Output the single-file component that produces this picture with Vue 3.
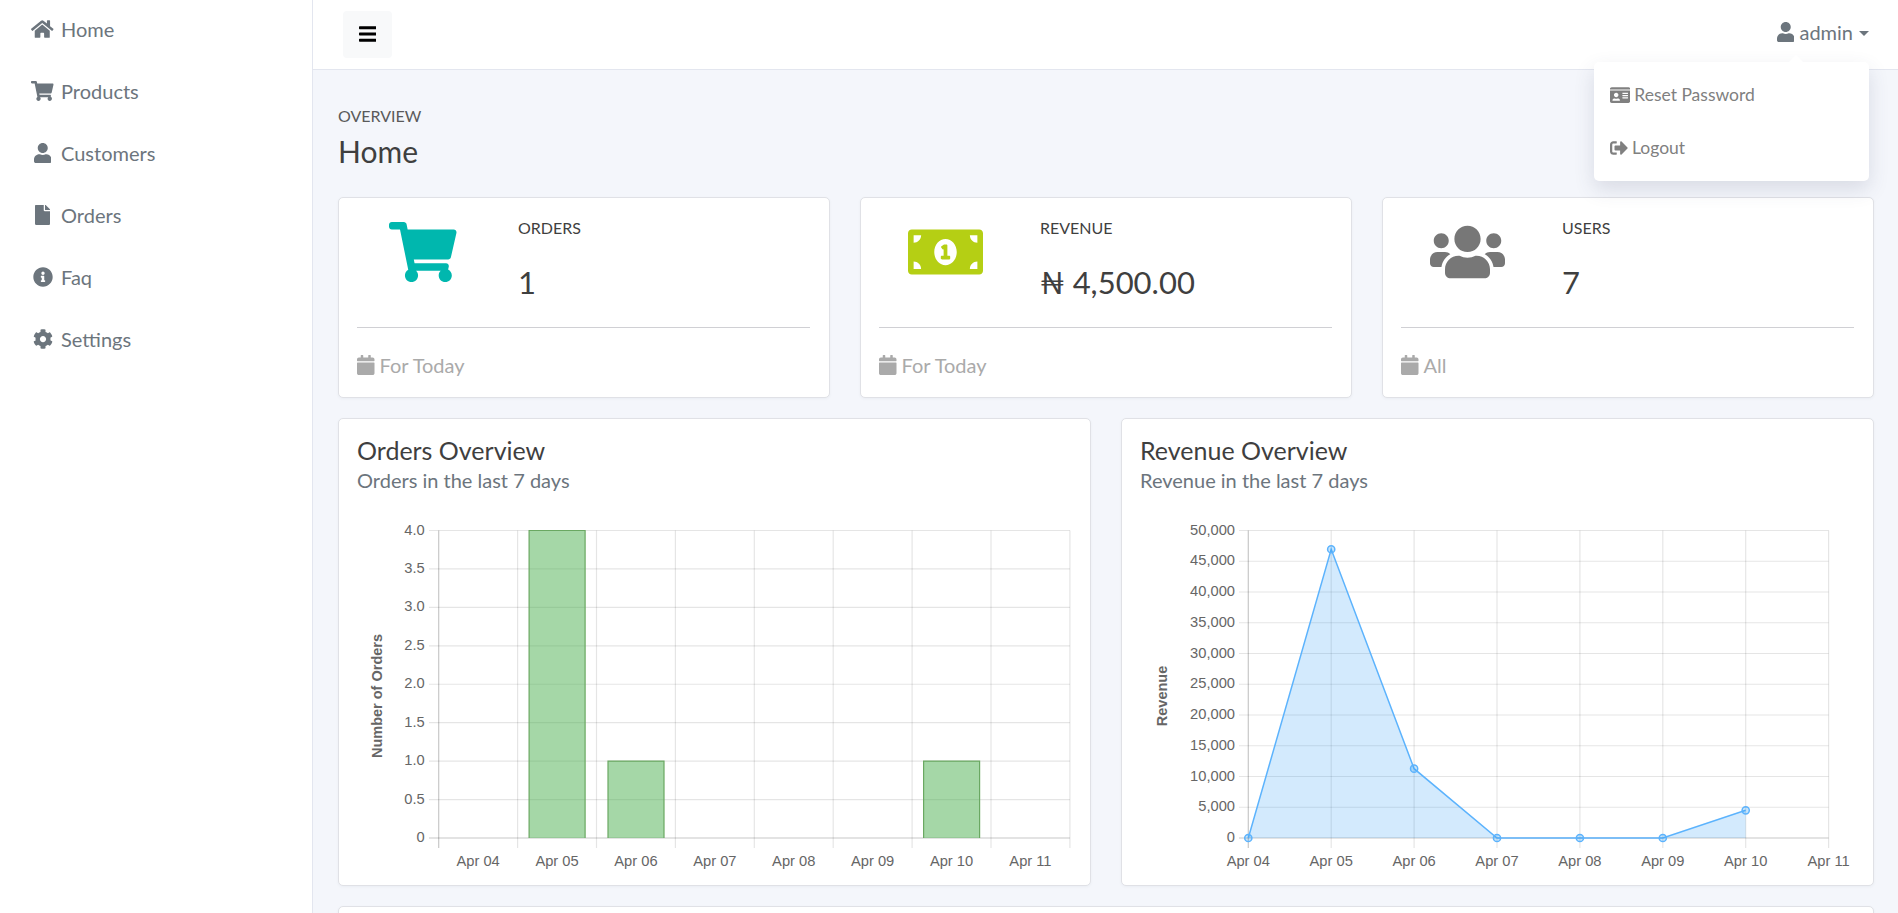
<script setup>
import { h } from 'vue'

const paths = {
  home: [576, 'M280.37 148.26L96 300.11V464a16 16 0 0 0 16 16l112.06-.29a16 16 0 0 0 15.92-16V368a16 16 0 0 1 16-16h64a16 16 0 0 1 16 16v95.64a16 16 0 0 0 16 16.05L464 480a16 16 0 0 0 16-16V300L295.67 148.26a12.19 12.19 0 0 0-15.3 0zM571.6 251.47L488 182.56V44.05a12 12 0 0 0-12-12h-56a12 12 0 0 0-12 12v72.61L318.47 43a48 48 0 0 0-61 0L4.34 251.47a12 12 0 0 0-1.6 16.9l25.5 31A12 12 0 0 0 45.15 301l235.22-193.74a12.19 12.19 0 0 1 15.3 0L530.9 301a12 12 0 0 0 16.9-1.6l25.5-31a12 12 0 0 0-1.7-16.93z'],
  cart: [576, 'M528.12 301.319l47.273-208C578.806 78.301 567.391 64 551.99 64H159.208l-9.166-44.81C147.758 8.021 137.93 0 126.529 0H24C10.745 0 0 10.745 0 24v16c0 13.255 10.745 24 24 24h69.883l70.248 343.435C147.325 417.1 136 435.222 136 456c0 30.928 25.072 56 56 56s56-25.072 56-56c0-15.674-6.447-29.835-16.824-40h209.647C430.447 426.165 424 440.326 424 456c0 30.928 25.072 56 56 56s56-25.072 56-56c0-22.172-12.888-41.332-31.579-50.405l5.517-24.276c3.413-15.018-8.002-29.319-23.403-29.319H218.117l-6.545-32h293.145c11.206 0 20.92-7.754 23.403-18.681z'],
  user: [448, 'M224 256c70.7 0 128-57.3 128-128S294.7 0 224 0 96 57.3 96 128s57.3 128 128 128zm89.6 32h-16.7c-22.2 10.2-46.9 16-72.9 16s-50.6-5.8-72.9-16h-16.7C60.2 288 0 348.2 0 422.4V464c0 26.5 21.5 48 48 48h352c26.5 0 48-21.5 48-48v-41.6c0-74.2-60.2-134.4-134.4-134.4z'],
  file: [384, 'M224 136V0H24C10.7 0 0 10.7 0 24v464c0 13.3 10.7 24 24 24h336c13.3 0 24-10.7 24-24V160H248c-13.2 0-24-10.8-24-24zm160-14.1v6.1H256V0h6.1c6.4 0 12.5 2.5 17 7l97.9 98c4.5 4.5 7 10.6 7 16.9z'],
  info: [512, 'M256 8C119.043 8 8 119.083 8 256c0 136.997 111.043 248 248 248s248-111.003 248-248C504 119.083 392.957 8 256 8zm0 110c23.196 0 42 18.804 42 42s-18.804 42-42 42-42-18.804-42-42 18.804-42 42-42zm56 254c0 6.627-5.373 12-12 12h-88c-6.627 0-12-5.373-12-12v-24c0-6.627 5.373-12 12-12h12v-64h-12c-6.627 0-12-5.373-12-12v-24c0-6.627 5.373-12 12-12h64c6.627 0 12 5.373 12 12v100h12c6.627 0 12 5.373 12 12v24z'],
  cog: [512, 'M487.4 315.7l-42.6-24.6c4.3-23.2 4.3-47 0-70.2l42.6-24.6c4.9-2.8 7.1-8.6 5.5-14-11.1-35.6-30-67.8-54.7-94.6-3.8-4.1-10-5.1-14.8-2.3L380.8 110c-17.9-15.4-38.5-27.3-60.8-35.1V25.8c0-5.6-3.9-10.5-9.4-11.7-36.7-8.2-74.3-7.8-109.2 0-5.5 1.2-9.4 6.1-9.4 11.7V75c-22.2 7.9-42.8 19.8-60.8 35.1L88.7 85.5c-4.9-2.8-11-1.9-14.8 2.3-24.7 26.7-43.6 58.9-54.7 94.6-1.7 5.4.6 11.2 5.5 14L67.3 221c-4.3 23.2-4.3 47 0 70.2l-42.6 24.6c-4.9 2.8-7.1 8.6-5.5 14 11.1 35.6 30 67.8 54.7 94.6 3.8 4.1 10 5.1 14.8 2.3l42.6-24.6c17.9 15.4 38.5 27.3 60.8 35.1v49.2c0 5.6 3.9 10.5 9.4 11.7 36.7 8.2 74.3 7.8 109.2 0 5.5-1.2 9.4-6.1 9.4-11.7v-49.2c22.2-7.9 42.8-19.8 60.8-35.1l42.6 24.6c4.9 2.8 11 1.9 14.8-2.3 24.7-26.7 43.6-58.9 54.7-94.6 1.5-5.5-.7-11.3-5.6-14.1zM256 336c-44.1 0-80-35.9-80-80s35.9-80 80-80 80 35.9 80 80-35.9 80-80 80z'],
  bars: [448, 'M16 132h416c8.837 0 16-7.163 16-16V76c0-8.837-7.163-16-16-16H16C7.163 60 0 67.163 0 76v40c0 8.837 7.163 16 16 16zm0 160h416c8.837 0 16-7.163 16-16v-40c0-8.837-7.163-16-16-16H16c-8.837 0-16 7.163-16 16v40c0 8.837 7.163 16 16 16zm0 160h416c8.837 0 16-7.163 16-16v-40c0-8.837-7.163-16-16-16H16c-8.837 0-16 7.163-16 16v40c0 8.837 7.163 16 16 16z'],
  calendar: [448, 'M12 192h424c6.6 0 12 5.4 12 12v260c0 26.5-21.5 48-48 48H48c-26.5 0-48-21.5-48-48V204c0-6.6 5.4-12 12-12zm436-44v-36c0-26.5-21.5-48-48-48h-48V12c0-6.6-5.4-12-12-12h-40c-6.6 0-12 5.4-12 12v52H160V12c0-6.6-5.4-12-12-12h-40c-6.6 0-12 5.4-12 12v52H48C21.5 64 0 85.5 0 112v36c0 6.6 5.4 12 12 12h424c6.6 0 12-5.4 12-12z'],
  idcard: [576, 'M528 32H48C21.5 32 0 53.5 0 80v16h576V80c0-26.5-21.5-48-48-48zM0 432c0 26.5 21.5 48 48 48h480c26.5 0 48-21.5 48-48V128H0v304zm352-232c0-4.4 3.6-8 8-8h144c4.4 0 8 3.6 8 8v16c0 4.4-3.6 8-8 8H360c-4.4 0-8-3.6-8-8v-16zm0 64c0-4.4 3.6-8 8-8h144c4.4 0 8 3.6 8 8v16c0 4.4-3.6 8-8 8H360c-4.4 0-8-3.6-8-8v-16zm0 64c0-4.4 3.6-8 8-8h144c4.4 0 8 3.6 8 8v16c0 4.4-3.6 8-8 8H360c-4.4 0-8-3.6-8-8v-16zM176 192c35.3 0 64 28.7 64 64s-28.7 64-64 64-64-28.7-64-64 28.7-64 64-64zM67.1 396.2C75.5 370.5 99.6 352 128 352h8.2c12.3 5.1 25.7 8 39.8 8s27.6-2.9 39.8-8h8.2c28.4 0 52.5 18.5 60.9 44.2 3.2 9.9-5.2 19.8-15.6 19.8H82.7c-10.4 0-18.8-10-15.6-19.8z'],
  signout: [512, 'M497 273L329 441c-15 15-41 4.5-41-17v-96H152c-13.3 0-24-10.7-24-24v-96c0-13.3 10.7-24 24-24h136V88c0-21.4 25.9-32 41-17l168 168c9.3 9.4 9.3 24.6 0 34zM192 436v-40c0-6.6-5.4-12-12-12H96c-17.7 0-32-14.3-32-32V160c0-17.7 14.3-32 32-32h84c6.6 0 12-5.4 12-12V76c0-6.6-5.4-12-12-12H96c-53 0-96 43-96 96v192c0 53 43 96 96 96h84c6.6 0 12-5.4 12-12z'],
  money: [640, 'M352 288h-16v-88c0-4.42-3.58-8-8-8h-13.58c-4.74 0-9.37 1.4-13.31 4.03l-15.33 10.22a7.994 7.994 0 0 0-2.22 11.09l8.88 13.31a7.994 7.994 0 0 0 11.09 2.22l.47-.31V288h-16c-4.42 0-8 3.58-8 8v16c0 4.42 3.58 8 8 8h64c4.42 0 8-3.58 8-8v-16c0-4.42-3.58-8-8-8zM608 64H32C14.33 64 0 78.33 0 96v320c0 17.67 14.33 32 32 32h576c17.67 0 32-14.33 32-32V96c0-17.67-14.33-32-32-32zM48 400v-64c35.35 0 64 28.65 64 64H48zm0-224v-64h64c0 35.35-28.65 64-64 64zm272 192c-53.02 0-96-50.15-96-112 0-61.86 42.98-112 96-112s96 50.14 96 112c0 61.87-43 112-96 112zm272 32h-64c0-35.35 28.65-64 64-64v64zm0-224c-35.35 0-64-28.65-64-64h64v64z'],
  users: [640, 'M96 224c35.3 0 64-28.7 64-64s-28.7-64-64-64-64 28.7-64 64 28.7 64 64 64zm448 0c35.3 0 64-28.7 64-64s-28.7-64-64-64-64 28.7-64 64 28.7 64 64 64zm32 32h-64c-17.6 0-33.5 7.1-45.1 18.6 40.3 22.1 68.9 62 75.1 109.4h66c17.7 0 32-14.3 32-32v-32c0-35.3-28.7-64-64-64zm-256 0c61.9 0 112-50.1 112-112S381.9 32 320 32 208 82.1 208 144s50.1 112 112 112zm76.8 32h-8.3c-20.8 10-43.9 16-68.5 16s-47.6-6-68.5-16h-8.3C179.6 288 128 339.6 128 403.2V432c0 26.5 21.5 48 48 48h288c26.5 0 48-21.5 48-48v-28.8c0-63.6-51.6-115.2-115.2-115.2zm-223.7-13.4C161.5 263.1 145.6 256 128 256H64c-35.3 0-64 28.7-64 64v32c0 17.7 14.3 32 32 32h65.9c6.3-47.4 34.9-87.3 75.2-109.4z'],
}

const Icon = (props) => {
  const [w, d] = paths[props.name]
  const s = props.size
  return h('svg', { viewBox: `0 0 ${w} 512`, width: (s * w) / 512, height: s, fill: 'currentColor' }, [h('path', { d })])
}
Icon.props = ['name', 'size']

const nav = [
  { label: 'Home', icon: 'home' },
  { label: 'Products', icon: 'cart' },
  { label: 'Customers', icon: 'user' },
  { label: 'Orders', icon: 'file' },
  { label: 'Faq', icon: 'info' },
  { label: 'Settings', icon: 'cog' },
]

const stats = [
  { label: 'ORDERS', value: '1', icon: 'cart', tone: 'teal', foot: 'For Today' },
  { label: 'REVENUE', value: '₦ 4,500.00', icon: 'money', tone: 'lime', foot: 'For Today' },
  { label: 'USERS', value: '7', icon: 'users', tone: 'grey', foot: 'All' },
]

const days = ['Apr 04', 'Apr 05', 'Apr 06', 'Apr 07', 'Apr 08', 'Apr 09', 'Apr 10', 'Apr 11']
const topY = 530.5
const zeroY = 838
const tickY = 848
const labelY = 861

function makeChart(originX, left, step, yLabels, labelRight, gridStart, titleX) {
  const ox = (v) => v - originX
  const oy = (v) => v - 510
  const n = yLabels.length - 1
  return {
    ox,
    oy,
    x: days.map((_, i) => left + i * step),
    right: left + 8 * step,
    rows: yLabels.map((text, i) => ({ text, y: topY + ((zeroY - topY) * i) / n })),
    labelRight,
    gridStart,
    titleX,
  }
}

const orders = makeChart(339, 438.7, 78.9, ['4.0', '3.5', '3.0', '2.5', '2.0', '1.5', '1.0', '0.5', '0'], 424.7, 429, 382)
const revenue = makeChart(1122, 1248.3, 82.9, ['50,000', '45,000', '40,000', '35,000', '30,000', '25,000', '20,000', '15,000', '10,000', '5,000', '0'], 1235, 1239, 1167)
revenue.right = revenue.x[7]

const bars = [
  { i: 1, v: 4 },
  { i: 2, v: 1 },
  { i: 6, v: 1 },
].map(({ i, v }) => {
  const x = orders.ox(orders.x[i] + 11.5)
  const y = orders.oy(zeroY - (v / 4) * (zeroY - topY))
  const b = orders.oy(zeroY)
  return { x, y, w: 56, h: b - y, edge: `M${x} ${b}V${y}H${x + 56}V${b}` }
})

const revValues = [0, 46950, 11270, 0, 0, 0, 4500]
const points = revValues.map((v, i) => ({
  x: revenue.ox(revenue.x[i]),
  y: revenue.oy(zeroY - (v / 50000) * (zeroY - topY)),
}))
const linePts = points.map((p) => `${p.x},${p.y}`).join(' ')
const areaPts = `${linePts} ${points[6].x},${revenue.oy(zeroY)} ${points[0].x},${revenue.oy(zeroY)}`

const charts = [
  { title: 'Orders Overview', sub: 'Orders in the last 7 days', axis: 'Number of Orders', c: orders, centered: false },
  { title: 'Revenue Overview', sub: 'Revenue in the last 7 days', axis: 'Revenue', c: revenue, centered: true },
]
</script>

<template>
  <div class="shell">
    <aside class="sidebar">
      <a v-for="item in nav" :key="item.label" class="nav-item">
        <span class="nav-icon"><Icon :name="item.icon" :size="20" /></span>
        <span>{{ item.label }}</span>
      </a>
    </aside>

    <div class="main">
      <header class="topbar">
        <button class="menu-btn" aria-label="Toggle menu"><Icon name="bars" :size="20" /></button>
        <div class="account">
          <Icon name="user" :size="20" />
          <span class="account-name">admin</span>
          <span class="caret"></span>
          <div class="dropdown">
            <a class="drop-item"><Icon name="idcard" :size="18" /><span>Reset Password</span></a>
            <a class="drop-item"><Icon name="signout" :size="18" /><span>Logout</span></a>
          </div>
        </div>
      </header>

      <main class="page">
        <div class="eyebrow">OVERVIEW</div>
        <h1 class="page-title">Home</h1>

        <section class="stats">
          <article v-for="s in stats" :key="s.label" class="card stat">
            <div class="stat-top">
              <div class="stat-icon" :class="s.tone"><Icon :name="s.icon" :size="60" /></div>
              <div>
                <div class="stat-label">{{ s.label }}</div>
                <div class="stat-value">{{ s.value }}</div>
              </div>
            </div>
            <div class="stat-foot">
              <Icon name="calendar" :size="20" />
              <span>{{ s.foot }}</span>
            </div>
          </article>
        </section>

        <section class="charts">
          <article v-for="ch in charts" :key="ch.title" class="card chart-card">
            <h2 class="chart-title">{{ ch.title }}</h2>
            <div class="chart-sub">{{ ch.sub }}</div>
            <svg class="chart" width="751" height="375" viewBox="0 0 751 375">
              <g class="grid">
                <line v-for="(r, i) in ch.c.rows.slice(0, -1)" :key="i" :x1="ch.c.ox(ch.c.gridStart)" :x2="ch.c.ox(ch.c.right)" :y1="ch.c.oy(r.y)" :y2="ch.c.oy(r.y)" />
                <line v-for="(x, i) in ch.c.x.slice(1).concat(ch.centered ? [] : [ch.c.right])" :key="'v' + i" :x1="ch.c.ox(x)" :x2="ch.c.ox(x)" :y1="ch.c.oy(topY)" :y2="ch.c.oy(tickY)" />
              </g>
              <g class="axis">
                <line :x1="ch.c.ox(ch.c.x[0])" :x2="ch.c.ox(ch.c.x[0])" :y1="ch.c.oy(topY)" :y2="ch.c.oy(tickY)" />
                <line :x1="ch.c.ox(ch.c.gridStart)" :x2="ch.c.ox(ch.c.right)" :y1="ch.c.oy(zeroY)" :y2="ch.c.oy(zeroY)" />
              </g>

              <template v-if="!ch.centered">
                <g v-for="b in bars" :key="b.x">
                  <rect class="bar" :x="b.x" :y="b.y" :width="b.w" :height="b.h" />
                  <path class="bar-edge" :d="b.edge" />
                </g>
              </template>
              <template v-else>
                <polygon class="area" :points="areaPts" />
                <polyline class="line" :points="linePts" />
                <circle v-for="(p, i) in points" :key="i" class="point" :cx="p.x" :cy="p.y" r="3.6" />
              </template>

              <text v-for="(r, i) in ch.c.rows" :key="'y' + i" class="tick" text-anchor="end" :x="ch.c.ox(ch.c.labelRight)" :y="ch.c.oy(r.y) + 4">{{ r.text }}</text>
              <text
                v-for="(d, i) in days"
                :key="d"
                class="tick"
                text-anchor="middle"
                :x="ch.c.ox(ch.centered ? ch.c.x[i] : ch.c.x[i] + 39.45)"
                :y="ch.c.oy(labelY) + 5"
              >{{ d }}</text>
              <text class="axis-title" text-anchor="middle" :transform="`translate(${ch.c.ox(ch.c.titleX)} ${ch.c.oy(696)}) rotate(-90)`">{{ ch.axis }}</text>
            </svg>
          </article>
        </section>

        <section class="card next-card"></section>
      </main>
    </div>
  </div>
</template>

<style>
html, body { margin: 0; height: 913px; overflow: hidden; background: #fff; }
</style>

<style scoped>
.shell {
  display: flex;
  width: 1898px;
  height: 913px;
  overflow: hidden;
  font-family: Lato, "Open Sans", sans-serif;
  color: #3f3f3f;
}
.sidebar {
  width: 312px;
  flex: none;
  display: flex;
  flex-direction: column;
  gap: 2px;
  margin-top: -1px;
  background: #fff;
  border-right: 1px solid #e3e6ef;
}
.nav-item {
  display: flex;
  align-items: center;
  height: 60px;
  padding-left: 30px;
  font-size: 20px;
  color: #6c757d;
}
.nav-icon {
  width: 25px;
  margin-right: 6px;
  display: flex;
  justify-content: center;
}
.main {
  flex: 1;
  min-width: 0;
  display: flex;
  flex-direction: column;
  background: #f4f6fb;
}
.topbar {
  height: 69px;
  flex: none;
  display: flex;
  align-items: center;
  justify-content: space-between;
  padding: 0 29px 0 30px;
  background: #fff;
  border-bottom: 1px solid #e3e6ef;
}
.menu-btn {
  width: 49px;
  height: 47px;
  margin-top: -1px;
  display: flex;
  align-items: center;
  justify-content: center;
  padding: 0;
  border: 0;
  border-radius: 4px;
  background: #f8f9fa;
  color: #000;
}
.account {
  position: relative;
  display: flex;
  align-items: center;
  height: 20px;
  margin-top: -5px;
  color: #6c757d;
  font-size: 20px;
}
.account-name { margin-left: 5px; }
.caret {
  margin-left: 6px;
  margin-top: 2px;
  border-top: 5px solid #6c757d;
  border-left: 5px solid transparent;
  border-right: 5px solid transparent;
}
.dropdown {
  position: absolute;
  top: 40px;
  right: 0;
  width: 275px;
  height: 119px;
  box-sizing: border-box;
  padding-top: 6px;
  background: #fff;
  border-radius: 5px;
  box-shadow: 0 8px 20px rgba(60, 70, 100, 0.15);
  z-index: 5;
}
.dropdown::before {
  content: "";
  position: absolute;
  top: -7px;
  left: 195px;
  border-bottom: 7px solid #fff;
  border-left: 7px solid transparent;
  border-right: 7px solid transparent;
}
.drop-item {
  display: flex;
  align-items: center;
  gap: 4px;
  height: 53px;
  padding-left: 16px;
  font-size: 17.5px;
  color: #808080;
}
.page {
  flex: 1;
  padding: 36px 24px 0 25px;
}
.eyebrow {
  font-size: 16px;
  line-height: 20px;
  color: #5a5a5a;
}
.page-title {
  margin: 7px 0 28px;
  font-size: 30px;
  line-height: 36px;
  font-weight: 400;
  color: #3f3f3f;
}
.card {
  box-sizing: border-box;
  background: #fff;
  border: 1px solid #e0e1e6;
  border-radius: 5px;
  box-shadow: 0 1px 3px rgba(60, 70, 100, 0.05);
}
.stats {
  display: grid;
  grid-template-columns: repeat(3, 1fr);
  gap: 30px;
}
.stat {
  height: 201px;
  padding: 0 19px 0 18px;
}
.stat-top {
  height: 129px;
  display: flex;
  border-bottom: 1px solid #d0d0d4;
}
.stat-icon {
  width: 132px;
  margin-right: 29px;
  padding-top: 24px;
  display: flex;
  justify-content: center;
  align-items: flex-start;
}
.teal { color: #00b7ae; }
.lime { color: #b5cf14; }
.grey { color: #777; }
.stat-label {
  margin-top: 20px;
  font-size: 16px;
  line-height: 20px;
  color: #3f3f3f;
}
.stat-value {
  margin-top: 24px;
  font-size: 31px;
  line-height: 40px;
  color: #3f3f3f;
}
.stat-foot {
  display: flex;
  align-items: center;
  gap: 5px;
  height: 20px;
  margin-top: 27px;
  font-size: 20px;
  color: #aaa;
}
.charts {
  display: grid;
  grid-template-columns: 1fr 1fr;
  gap: 30px;
  margin-top: 20px;
}
.chart-card {
  height: 468px;
  padding-top: 15px;
}
.chart-title {
  margin: 0 0 2px 18px;
  font-size: 25px;
  line-height: 32px;
  font-weight: 400;
  color: #3f3f3f;
}
.chart-sub {
  margin-left: 18px;
  font-size: 20px;
  line-height: 24px;
  color: #6c757d;
}
.chart {
  display: block;
  margin-top: 18px;
}
.grid line { stroke: rgba(0, 0, 0, 0.1); stroke-width: 1.2; }
.axis line { stroke: rgba(0, 0, 0, 0.22); stroke-width: 1.2; }
.bar { fill: rgba(76, 175, 80, 0.5); }
.bar-edge { fill: none; stroke: #6aa862; stroke-width: 1.2; }
.area { fill: rgba(33, 150, 243, 0.2); }
.line { fill: none; stroke: #5cb3fd; stroke-width: 1.5; }
.point { fill: rgba(33, 150, 243, 0.25); stroke: #5cb3fd; stroke-width: 1.5; }
.tick {
  font-family: "Liberation Sans", Arial, sans-serif;
  font-size: 14.7px;
  fill: #666;
}
.axis-title {
  font-family: "Liberation Sans", Arial, sans-serif;
  font-size: 14.5px;
  font-weight: 700;
  fill: #666;
}
.next-card {
  height: 80px;
  margin-top: 20px;
}
</style>
